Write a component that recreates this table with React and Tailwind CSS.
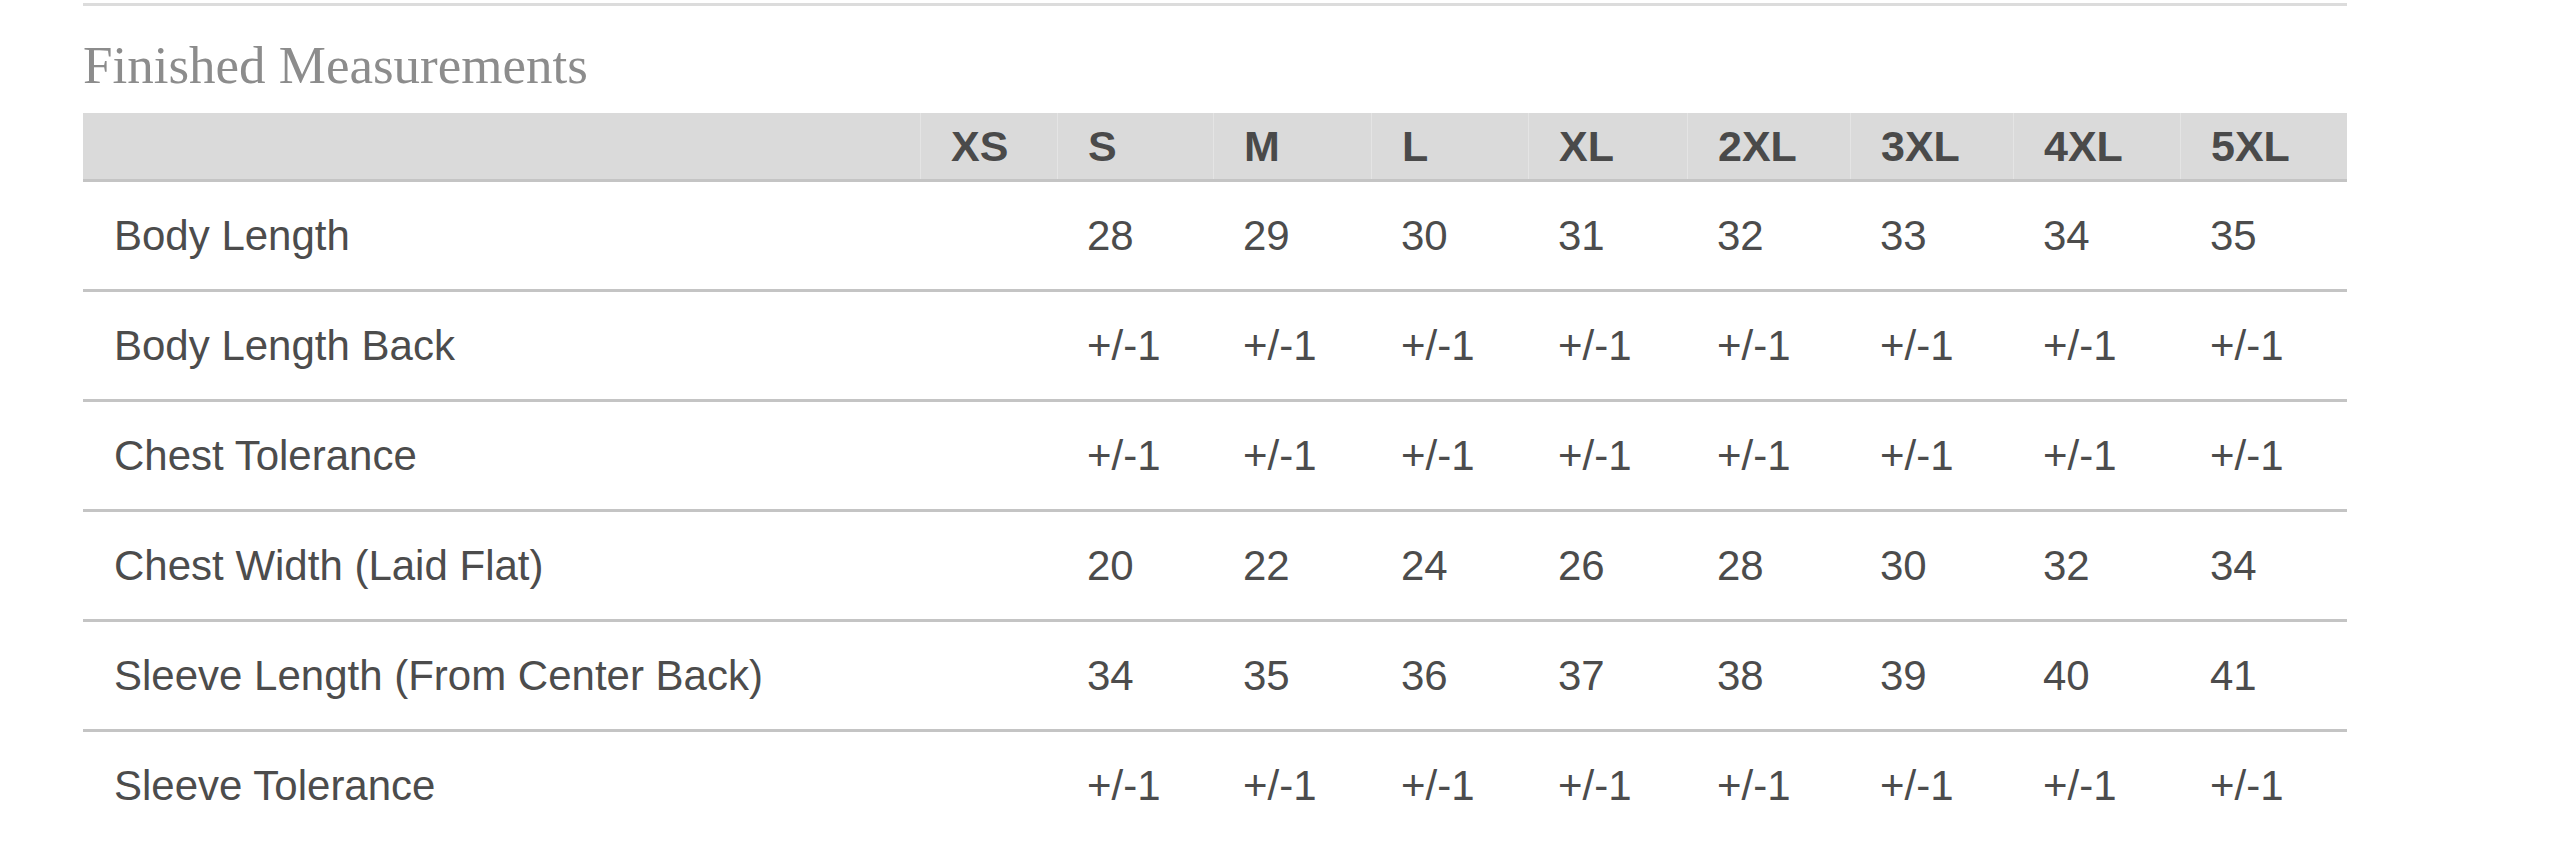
import React from "react"

const sizes = ["XS", "S", "M", "L", "XL", "2XL", "3XL", "4XL", "5XL"]

const rows = [
  { label: "Body Length", values: ["", "28", "29", "30", "31", "32", "33", "34", "35"] },
  { label: "Body Length Back", values: ["", "+/-1", "+/-1", "+/-1", "+/-1", "+/-1", "+/-1", "+/-1", "+/-1"] },
  { label: "Chest Tolerance", values: ["", "+/-1", "+/-1", "+/-1", "+/-1", "+/-1", "+/-1", "+/-1", "+/-1"] },
  { label: "Chest Width (Laid Flat)", values: ["", "20", "22", "24", "26", "28", "30", "32", "34"] },
  { label: "Sleeve Length (From Center Back)", values: ["", "34", "35", "36", "37", "38", "39", "40", "41"] },
  { label: "Sleeve Tolerance", values: ["", "+/-1", "+/-1", "+/-1", "+/-1", "+/-1", "+/-1", "+/-1", "+/-1"] },
]

const cols =
  "grid grid-cols-[837px_137px_156px_158px_157px_159px_163px_163px_167px_167px]"

export default function App() {
  return (
    <div className="min-h-screen bg-white font-['Liberation_Sans',Arial,sans-serif] text-[#4c4c4c]">
      <div className="ml-[83px] w-[2264px] pt-[3px]">
        <div className="h-[3px] bg-[#dcdcdc]" />

        <h2 className="pt-[33px] pb-[21px] font-['Liberation_Serif','Times_New_Roman',serif] text-[53px] leading-[53px] font-normal text-[#8c8c8c]">
          Finished Measurements
        </h2>

        {/* header */}
        <div className={`${cols} h-[69px] bg-[#dadada] border-b-[3px] border-[#c4c4c4]`}>
          <div />
          {sizes.map((s) => (
            <div
              key={s}
              className="flex items-center pl-[30px] border-l border-[#e4e4e4] text-[43px] font-bold text-[#4a4a4a] leading-none"
            >
              {s}
            </div>
          ))}
        </div>

        {/* rows */}
        {rows.map((row, i) => (
          <div
            key={row.label}
            className={`${cols} ${
              i < rows.length - 1 ? "h-[110px] border-b-[3px] border-[#c4c4c4]" : "h-[107px]"
            } text-[42px] leading-none`}
          >
            <div className="flex items-center pl-[31px]">{row.label}</div>
            {row.values.map((v, j) => (
              <div key={j} className="flex items-center pl-[30px]">
                {v}
              </div>
            ))}
          </div>
        ))}
      </div>
    </div>
  )
}
